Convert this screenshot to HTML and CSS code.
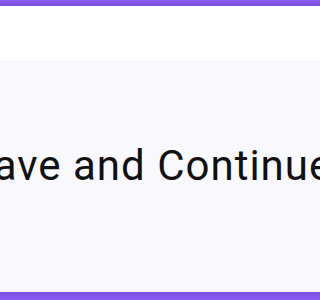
FILE: index.html
```html
<!DOCTYPE html>
<html>
<head>
<meta charset="utf-8">
<link rel="stylesheet" href="styles.css">
</head>
<body>
<div class="frame">
  <div class="bar bar-top"></div>
  <div class="upper"></div>
  <div class="band">
    <div class="stage">
      <span class="label">Save and Continue</span>
    </div>
  </div>
  <div class="glow"></div>
  <div class="bar bar-bottom"></div>
</div>
</body>
</html>
```

FILE: styles.css
```css
html, body {
  margin: 0;
  padding: 0;
  background: #ffffff;
  overflow: hidden;
}
.frame {
  width: 100%;
  height: 300px;
  display: flex;
  flex-direction: column;
  overflow: hidden;
}
.bar-top {
  height: 6px;
  flex: none;
  background: linear-gradient(#8d5cf7, #7b4fe0);
}
.upper {
  height: 54px;
  flex: none;
  background: #ffffff;
}
.band {
  flex: 1;
  padding-top: 85px;
  background: linear-gradient(#f8f9fd, #f9f8fd);
  overflow: hidden;
}
.stage {
  width: 300px;
  display: flex;
  justify-content: center;
}
.label {
  flex: none;
  white-space: nowrap;
  font-family: Roboto, "Liberation Sans", sans-serif;
  font-size: 42px;
  line-height: 42px;
  letter-spacing: 1px;
  color: #111111;
}
.glow {
  height: 1px;
  flex: none;
  background: #fbeef8;
}
.bar-bottom {
  height: 8px;
  flex: none;
  background: linear-gradient(#7d52e6, #8b5cf6);
}
```
